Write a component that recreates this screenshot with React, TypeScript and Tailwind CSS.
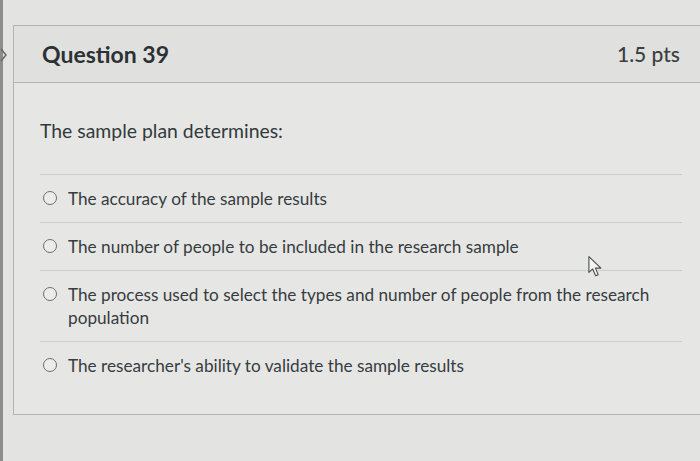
const answers = [
  'The accuracy of the sample results',
  'The number of people to be included in the research sample',
  'The process used to select the types and number of people from the research population',
  "The researcher's ability to validate the sample results",
];

function Radio() {
  return (
    <span className="mt-[4px] h-[14px] w-[14px] shrink-0 rounded-full border-[1.5px] border-[#6b6f70] bg-[#ecedeb]" />
  );
}

export default function App() {
  return (
    <div
      className="relative flex h-[461px] w-[700px] overflow-hidden bg-[#e3e4e2] text-[#2f3538]"
      style={{ fontFamily: 'Lato, "Open Sans", sans-serif' }}
    >
      {/* dark strip at left edge of photo */}
      <div className="relative w-[3px] shrink-0 bg-[#8d8e8b]">
        <svg className="absolute left-0 top-[48px]" width="8" height="14" viewBox="0 0 8 14">
          <path d="M1 1 L6 7 L1 13" fill="none" stroke="#666" strokeWidth="1.5" />
        </svg>
      </div>

      <div className="flex-1 pl-[10px] pt-[25px]">
        <div className="h-[390px] border border-r-0 border-[#b3b5b2] bg-[#e6e7e5]">
          {/* Header */}
          <div className="flex h-[57px] items-center justify-between border-b border-[#b3b5b2] bg-[#e0e1df] pl-[28px] pr-[20px]">
            <h2 className="text-[23px] font-bold text-[#2c3134]">Question 39</h2>
            <span className="text-[21px] font-medium text-[#3a3f42]">1.5 pts</span>
          </div>

          {/* Body */}
          <div className="pl-[26px] pr-[18px] pt-[35px]">
            <p className="text-[19.4px] leading-[26px] text-[#33393c]">The sample plan determines:</p>

            <div className="mt-[30px]">
              {answers.map((a, i) => (
                <div key={i} className="flex gap-[11px] border-t border-[#cdcfcc] py-[12px] pl-[3px]">
                  <Radio />
                  <span className="text-[17.2px] leading-[23px] text-[#363c3f]">{a}</span>
                </div>
              ))}
            </div>
          </div>
        </div>
      </div>

      {/* mouse cursor */}
      <svg className="absolute left-[586px] top-[255px]" width="20" height="24" viewBox="0 0 16 22">
        <path
          d="M1.5 1.5 L1.5 16 L5 12.8 L7.6 19 L10 18 L7.5 12 L12.5 12 Z"
          fill="#f4f4f2"
          stroke="#4a4d4f"
          strokeWidth="1"
          strokeLinejoin="round"
        />
      </svg>
    </div>
  );
}
